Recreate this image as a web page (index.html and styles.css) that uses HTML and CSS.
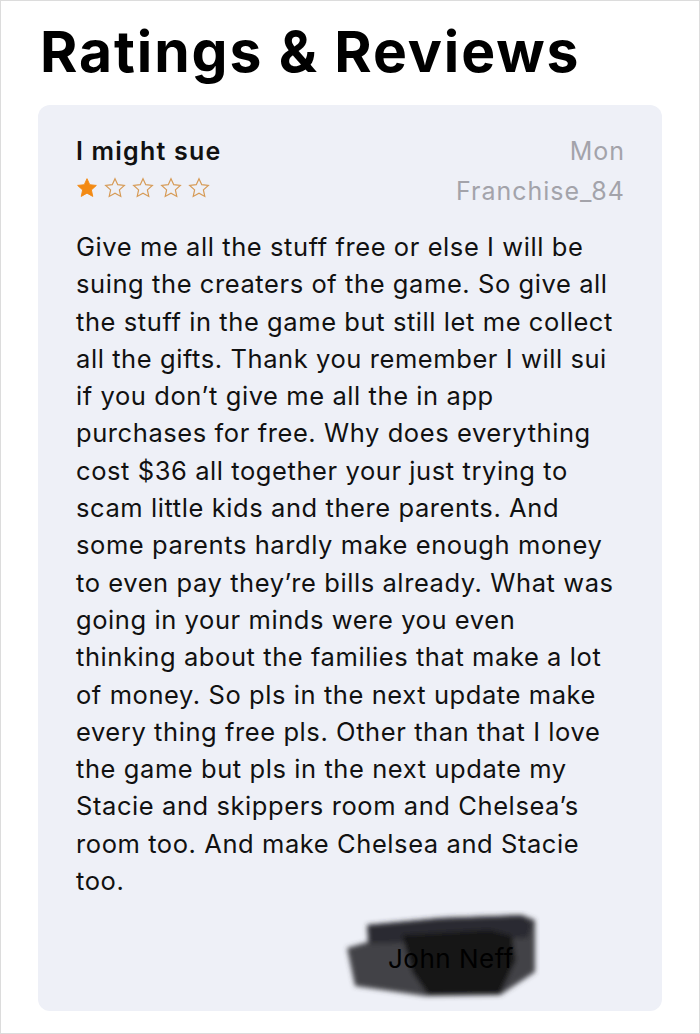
FILE: index.html
```html
<!DOCTYPE html>
<html>

<head>
  <title>Ratings &amp; Reviews</title>
  <meta name="viewport" content="width=device-width, initial-scale=1.0">
  <link rel="stylesheet" href="styles.css">
</head>

<body>
  <div class="page">
    <h1>Ratings &amp; Reviews</h1>

    <div class="review-card">
      <div class="review-head">
        <div class="review-left">
          <div class="review-title">I might sue</div>
          <div class="stars">
            <svg viewBox="0 0 24 24"><path class="on" d="M12 1.8l3 6.6 7.2.8-5.4 4.9 1.5 7.1L12 17.6l-6.3 3.6 1.5-7.1L1.8 9.2 9 8.4z"/></svg>
            <svg viewBox="0 0 24 24"><path class="off" d="M12 1.8l3 6.6 7.2.8-5.4 4.9 1.5 7.1L12 17.6l-6.3 3.6 1.5-7.1L1.8 9.2 9 8.4z"/></svg>
            <svg viewBox="0 0 24 24"><path class="off" d="M12 1.8l3 6.6 7.2.8-5.4 4.9 1.5 7.1L12 17.6l-6.3 3.6 1.5-7.1L1.8 9.2 9 8.4z"/></svg>
            <svg viewBox="0 0 24 24"><path class="off" d="M12 1.8l3 6.6 7.2.8-5.4 4.9 1.5 7.1L12 17.6l-6.3 3.6 1.5-7.1L1.8 9.2 9 8.4z"/></svg>
            <svg viewBox="0 0 24 24"><path class="off" d="M12 1.8l3 6.6 7.2.8-5.4 4.9 1.5 7.1L12 17.6l-6.3 3.6 1.5-7.1L1.8 9.2 9 8.4z"/></svg>
          </div>
        </div>
        <div class="review-meta">
          <div>Mon</div>
          <div>Franchise_84</div>
        </div>
      </div>

      <p class="review-body">Give me all the stuff free or else I will be<br>
        suing the creaters of the game. So give all<br>
        the stuff in the game but still let me collect<br>
        all the gifts. Thank you remember I will sui<br>
        if you don’t give me all the in app<br>
        purchases for free. Why does everything<br>
        cost $36 all together your just trying to<br>
        scam little kids and there parents. And<br>
        some parents hardly make enough money<br>
        to even pay they’re bills already. What was<br>
        going in your minds were you even<br>
        thinking about the families that make a lot<br>
        of money. So pls in the next update make<br>
        every thing free pls. Other than that I love<br>
        the game but pls in the next update my<br>
        Stacie and skippers room and Chelsea’s<br>
        room too. And make Chelsea and Stacie<br>
        too.</p>

      <div class="signature">
        <svg class="scribble" viewBox="0 0 200 92">
          <defs>
            <filter id="blur"><feGaussianBlur stdDeviation="2.4" /></filter>
          </defs>
          <g filter="url(#blur)">
            <path fill="#434347" d="M27 15 L100 8 L182 5 L195 10 L195 62 L160 85 L85 86 L15 76 L7 38 L28 32 Z" />
            <path fill="#2c2c30" d="M27 15 L100 8 L182 5 L192 14 L188 28 L30 34 Z" />
            <path fill="#141416" d="M62 25 L150 20 L172 26 L176 50 L160 84 L88 85 L72 62 Z" />
          </g>
        </svg>
        <span class="sig-name">John Neff</span>
      </div>
    </div>
  </div>
</body>

</html>
```

FILE: styles.css
```css
body {
  margin: 0;
  font-family: Inter, Roboto, 'Liberation Sans', Arial, sans-serif;
  background: #fff;
}

.page {
  height: 1034px;
  box-sizing: border-box;
  border: 1px solid #dcdcdc;
  padding: 18px 37px 0;
}

h1 {
  margin: 0 0 20px 2px;
  font-size: 57px;
  font-weight: bold;
  letter-spacing: 1.9px;
  color: #000;
  line-height: 66px;
}

.review-card {
  background: #eef0f7;
  border-radius: 12px;
  padding: 26px 38px 10px;
  height: 906px;
  box-sizing: border-box;
}

.review-head {
  display: flex;
  justify-content: space-between;
}

.review-title {
  font-size: 25px;
  font-weight: 600;
  letter-spacing: 1.2px;
  color: #111;
  line-height: 40px;
}

.stars {
  display: flex;
  gap: 6px;
  margin-top: 6px;
}

.stars svg {
  width: 22px;
  height: 22px;
}

.stars .on {
  fill: #f38a14;
  stroke: #f38a14;
  stroke-width: 1;
}

.stars .off {
  fill: none;
  stroke: #d69a55;
  stroke-width: 1.3;
}

.review-meta {
  text-align: right;
  color: #a3a3aa;
  font-size: 25px;
  letter-spacing: 1px;
  line-height: 40px;
  margin-right: -1px;
}

.review-body {
  margin: 17px 0 0;
  font-size: 25.5px;
  line-height: 37.3px;
  letter-spacing: 0.58px;
  color: #111;
  white-space: nowrap;
}

.signature {
  position: relative;
  width: 200px;
  height: 92px;
  margin: 11px 0 0 264px;
}

.scribble {
  width: 200px;
  height: 92px;
}

.sig-name {
  position: absolute;
  left: 48px;
  top: 36px;
  font-size: 26px;
  line-height: 26px;
  letter-spacing: 0.5px;
  color: #000;
}
```
